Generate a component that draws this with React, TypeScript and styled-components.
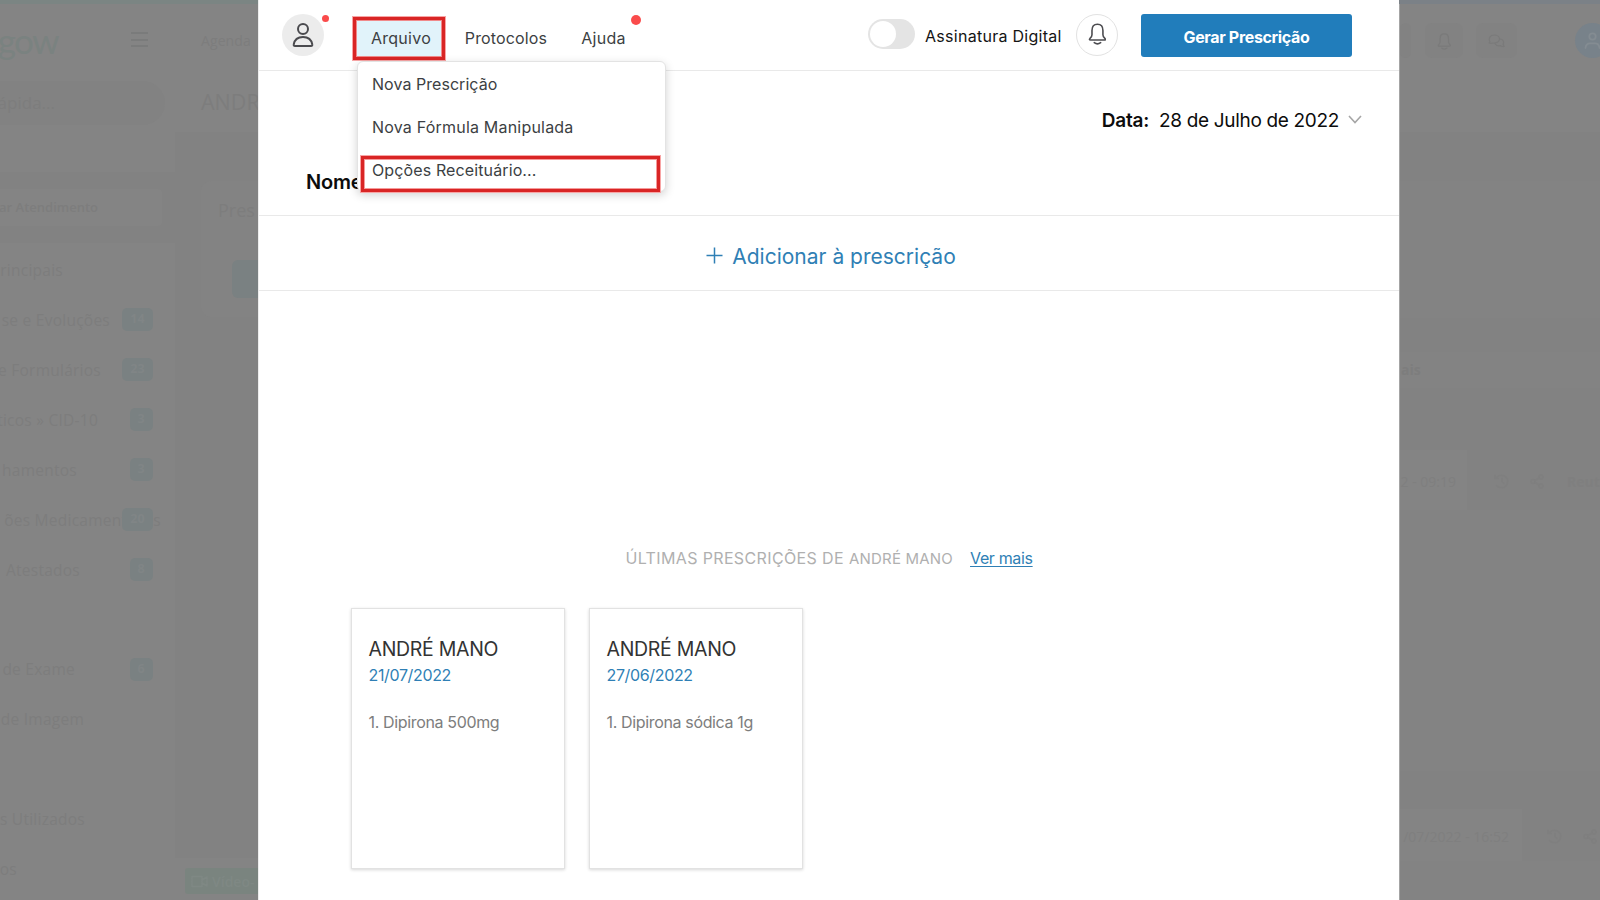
import React from "react";
import styled, { createGlobalStyle } from "styled-components";

const GlobalStyle = createGlobalStyle`
  * { box-sizing: border-box; }
  body { margin: 0; background: #838383; }
  button { font: inherit; border: 0; padding: 0; background: none; }
  svg { display: block; }
`;

const ghostText = "#7d7d7d";

const Page = styled.div`
  position: relative;
  width: 1600px;
  height: 900px;
  overflow: hidden;
  display: grid;
  grid-template-columns: 258px 1141px 201px;
  font-family: Inter, "Liberation Sans", sans-serif;
  color: #3c3f43;
`;

/* ---------- dimmed application, left side ---------- */

const Behind = styled.div<{ $bar: string }>`
  height: 900px;
  overflow: hidden;
  display: flex;
  background: #828282;
  border-top: 4px solid ${(p) => p.$bar};
  font-family: "Open Sans", sans-serif;
  color: ${ghostText};
`;

const Sidebar = styled.aside`
  width: 175px;
  flex: none;
  background: #848484;
`;

const Brand = styled.div`
  height: 77px;
  display: flex;
  justify-content: space-between;
  padding: 13px 27px 0 0;
`;

const Logo = styled.span`
  width: 58px;
  height: 50px;
  display: flex;
  justify-content: flex-end;
  font: 400 35px/46px Lato, sans-serif;
  letter-spacing: -1.6px;
  color: #7a8280;
`;

const Burger = styled.span`
  width: 17px;
  height: 15px;
  margin-top: 15px;
  border: solid #7a7b7b;
  border-width: 2px 0;
  display: flex;
  align-items: center;
  &::after { content: ""; width: 17px; height: 2px; background: #7a7b7b; }
`;

const Search = styled.div`
  width: 165px;
  height: 44px;
  border-radius: 0 22px 22px 0;
  background: #828282;
  font-size: 17px;
  line-height: 44px;
`;

const SideGap = styled.div`
  height: 71px;
  margin: 47px 0 0;
  padding: 17px 0;
  background: #828282;
`;

const Attend = styled.div`
  width: 162px;
  height: 37px;
  border-radius: 0 4px 4px 0;
  background: #848484;
  font-size: 13px;
  line-height: 36px;
  font-weight: 600;
`;

const Cut = styled.span<{ $w: number }>`
  display: flex;
  justify-content: flex-end;
  width: ${(p) => p.$w}px;
  white-space: nowrap;
  flex: none;
`;

const SideMenu = styled.div`
  padding-top: 2px;
`;

const SideRow = styled.div`
  height: 49.95px;
  display: flex;
  align-items: center;
  position: relative;
  font-size: 15.5px;
  letter-spacing: 0.25px;
`;

const Count = styled.span`
  position: absolute;
  right: 22px;
  top: 13px;
  min-width: 22px;
  height: 23px;
  padding: 0 8px;
  border-radius: 5px;
  background: #7a8182;
  color: #808586;
  font-size: 12.5px;
  font-weight: 700;
  line-height: 22px;
`;

const Workspace = styled.div`
  flex: 1;
  display: flex;
  flex-direction: column;
`;

const Head = styled.div`
  height: 128px;
  padding: 24px 0 0 26px;
  background: #848484;
  white-space: nowrap;
`;

const Crumb = styled.div`
  font-size: 14px;
  line-height: 26px;
  letter-spacing: 0.1px;
`;

const PatientTitle = styled.div`
  margin-top: 32px;
  font-size: 21.5px;
  line-height: 32px;
`;

const GhostPanel = styled.div`
  height: 136px;
  margin: 49px 0 0 26px;
  padding: 16px 0 0 17px;
  border-radius: 10px 0 0 10px;
  background: #838383;
  font-size: 18px;
  line-height: 27px;
  white-space: nowrap;
`;

const GhostButton = styled.div`
  height: 38px;
  margin: 36px 0 0 14px;
  border-radius: 6px 0 0 6px;
  background: #7a8182;
`;

const Footer = styled.div`
  height: 42px;
  margin-top: auto;
  padding: 10px 0 0 10px;
  background: #848484;
`;

const VideoButton = styled.div`
  height: 26px;
  padding-left: 6px;
  display: flex;
  align-items: center;
  gap: 4px;
  background: #7a847f;
  color: #7f8884;
  font-size: 14px;
  font-weight: 600;
  white-space: nowrap;
  border-radius: 3px 0 0 3px;
`;

/* ---------- dimmed application, right side ---------- */

const RightArea = styled.div`
  flex: 1;
  border-left: 1px solid #a4a4a4;
`;

const Tools = styled.div`
  height: 128px;
  display: flex;
  align-items: flex-start;
  padding-top: 19px;
  background: #848484;
`;

const Tool = styled.div<{ $w: number; $gap: number }>`
  width: ${(p) => p.$w}px;
  height: 35px;
  padding-top: 1px;
  margin-right: ${(p) => p.$gap}px;
  border-radius: 7px;
  background: #828282;
  display: flex;
  align-items: center;
  justify-content: center;
  color: #7a7a7a;
`;

const UserDot = styled.div`
  width: 35px;
  height: 35px;
  flex: none;
  border-radius: 50%;
  background: #78828a;
  color: #848c92;
  display: flex;
  align-items: center;
  justify-content: center;
`;

const Block = styled.div<{ $h: number; $tone: string }>`
  height: ${(p) => p.$h}px;
  background: ${(p) => p.$tone};
`;

const Tab = styled(Block)`
  padding: 9px 0 0 1px;
  font-size: 14px;
  font-weight: 700;
  line-height: 18px;
`;

const Entry = styled.div<{ $w: number; $h: number }>`
  height: ${(p) => p.$h}px;
  padding-top: 2px;
  display: flex;
  align-items: center;
  background: linear-gradient(to right, #848484 ${(p) => p.$w}px, #828282 ${(p) => p.$w}px);
  font-size: 14px;
  white-space: nowrap;
  color: #7f7f7f;
`;

const Stamp = styled.span<{ $w: number; $space: number }>`
  width: ${(p) => p.$w}px;
  margin-right: ${(p) => p.$space}px;
  flex: none;
  display: flex;
  justify-content: flex-end;
`;

const EntryIcons = styled.span`
  display: flex;
  gap: 21px;
  margin-right: 23px;
`;

/* ---------- prescription window ---------- */

const Modal = styled.main`
  position: relative;
  height: 900px;
  background: #fff;
  border-left: 1px solid #ececec;
`;

const Header = styled.header`
  height: 71px;
  padding: 14px 47px 0 23px;
  display: flex;
  align-items: flex-start;
  border-bottom: 1px solid #e9e9e9;
`;

const Avatar = styled.div`
  position: relative;
  width: 42px;
  height: 42px;
  border-radius: 50%;
  background: #ececec;
  display: flex;
  align-items: center;
  justify-content: center;
  color: #4a4a4e;
`;

const Alert = styled.i<{ $size: number; $x: number; $y: number }>`
  position: absolute;
  right: ${(p) => p.$x}px;
  top: ${(p) => p.$y}px;
  width: ${(p) => p.$size}px;
  height: ${(p) => p.$size}px;
  border-radius: 50%;
  background: #fa4b4b;
`;

const Nav = styled.nav`
  display: flex;
  margin: 3px 0 0 29px;
`;

const NavItem = styled.button<{ $active?: boolean; $w: number; $ls: number }>`
  position: relative;
  width: ${(p) => p.$w}px;
  height: 43px;
  padding-bottom: 2px;
  font-size: 16px;
  letter-spacing: ${(p) => p.$ls}px;
  color: #3c3f43;
  ${(p) => p.$active && `padding-left: 4px; background: #e1f3fa; border: 3px solid #d92525; box-shadow: inset 0 0 0 1px #f08a8a, 0 0 0 1px #f8a5a5;`}
`;

const Actions = styled.div`
  display: flex;
  margin-left: auto;
`;

const Toggle = styled.div`
  width: 47px;
  height: 30px;
  margin-top: 5px;
  padding: 2px;
  border-radius: 15px;
  background: #e4e4e4;
  &::after {
    content: "";
    display: block;
    width: 26px;
    height: 26px;
    border-radius: 50%;
    background: #fff;
  }
`;

const ToggleLabel = styled.span`
  width: 161px;
  padding-left: 10px;
  font-size: 16px;
  letter-spacing: 0.28px;
  line-height: 44px;
  color: #141414;
`;

const Bell = styled.div`
  width: 42px;
  height: 42px;
  padding-bottom: 3px;
  margin-right: 23px;
  border: 1.5px solid #e2e2e2;
  border-radius: 50%;
  display: flex;
  align-items: center;
  justify-content: center;
  color: #4c4c50;
`;

const Primary = styled.button`
  width: 211px;
  height: 43px;
  padding-top: 2px;
  border-radius: 3px;
  background: #217dbb;
  color: #fff;
  font-size: 16px;
  font-weight: 700;
  letter-spacing: -0.34px;
`;

const Patient = styled.section`
  height: 145px;
  padding: 36px 37px 0 47px;
  border-bottom: 1px solid #e9e9e9;
  color: #0c0c0c;
`;

const DateRow = styled.div`
  display: flex;
  justify-content: flex-end;
  align-items: center;
  font-size: 19px;
  line-height: 27px;
`;

const DateLabel = styled.b`
  font-weight: 600;
  letter-spacing: -0.2px;
  margin-right: 10px;
`;

const DateValue = styled.span`
  letter-spacing: -0.33px;
  margin-right: 9px;
`;

const NameLabel = styled.div`
  margin-top: 34px;
  font-size: 20px;
  font-weight: 600;
  line-height: 28px;
  letter-spacing: -0.2px;
`;

const AddRow = styled.button`
  width: 100%;
  height: 75px;
  padding: 5px 0 0 4px;
  display: flex;
  justify-content: center;
  align-items: center;
  gap: 9px;
  border-bottom: 1px solid #e9e9e9;
  font-size: 21px;
  color: #2f7fb5;
`;

const AddText = styled.span`
  padding-top: 2px;
`;

const Recent = styled.div`
  height: 28px;
  margin: 253px 0 36px;
  display: flex;
  justify-content: center;
  align-items: center;
  font-size: 16px;
  color: #b0b0b0;
`;

const RecentTitle = styled.span`
  letter-spacing: 0.37px;
  margin-right: 5px;
`;

const RecentName = styled.span`
  font-size: 15px;
  letter-spacing: 0.2px;
  margin-right: 17px;
`;

const More = styled.a`
  color: #2f7fb5;
  letter-spacing: -0.35px;
  text-decoration: underline;
  text-underline-offset: 2px;
`;

const Cards = styled.div`
  display: flex;
  gap: 24px;
  padding-left: 91.5px;
`;

const Card = styled.article`
  width: 214px;
  height: 261px;
  padding: 27px 17px;
  border: 1px solid #e2e2e2;
  box-shadow: 0 1px 3px rgba(0, 0, 0, 0.16);
  white-space: nowrap;
`;

const CardName = styled.div`
  font-size: 19.5px;
  line-height: 27px;
  letter-spacing: -0.3px;
  color: #333;
`;

const CardDate = styled.div`
  font-size: 16px;
  line-height: 24px;
  letter-spacing: -0.35px;
  color: #2f7fb5;
`;

const CardItem = styled.div`
  margin-top: 23px;
  font-size: 16px;
  line-height: 24px;
  letter-spacing: -0.35px;
  color: #7d7d7d;
`;

const Menu = styled.div`
  position: absolute;
  left: 98px;
  top: 61px;
  width: 309px;
  height: 131px;
  padding-top: 1px;
  border: 1px solid #e3e3e3;
  border-radius: 6px;
  background: #fff;
  box-shadow: 0 3px 10px rgba(0, 0, 0, 0.18);
`;

const MenuItem = styled.div<{ $ls: number }>`
  height: 43px;
  padding-left: 14px;
  font-size: 16px;
  line-height: 42px;
  letter-spacing: ${(p) => p.$ls}px;
  color: #3c3f43;
`;

const Marker = styled.div`
  position: absolute;
  left: 3px;
  top: 94px;
  width: 299px;
  height: 36px;
  border: 3px solid #d92525;
  box-shadow: inset 0 0 0 1px #f59a9a, 0 0 0 1px #f8a5a5;
`;

type IconProps = { size?: number };

const strokeProps = { fill: "none", stroke: "currentColor", strokeLinecap: "round" as const, strokeLinejoin: "round" as const };

const PersonIcon = () => (
  <svg width="22" height="26" viewBox="0 0 22 26" {...strokeProps} strokeWidth="2">
    <circle cx="11" cy="7" r="5" />
    <path d="M3 24h16c1 0 1.500-.6 1.300-1.500C19.500 18 16 15 11 15S2.500 18 1.700 22.500C1.500 23.400 2 24 3 24Z" />
  </svg>
);

const BellIcon = ({ size = 22 }: IconProps) => (
  <svg width={size * 0.86} height={size} viewBox="0 0 19 22" {...strokeProps} strokeWidth="1.6">
    <path d="M4 7.500C4 3.500 6.300 1.200 9.500 1.200S15 3.500 15 7.500v4.200c0 1.600.7 2.400 1.800 3.500 1.100 1.200.9 1.900-.4 1.900H2.600c-1.300 0-1.500-.7-.4-1.900C3.300 14.100 4 13.300 4 11.700Z" />
    <path d="M6.300 19.700c1.800 1.400 4.600 1.400 6.400 0" />
  </svg>
);

const ChatIcon = () => (
  <svg width="17" height="15" viewBox="0 0 17 15" {...strokeProps} strokeWidth="1.200">
    <path d="M1 9c.8-.5 1-1 .8-1.500C.2 4 2.500 1 6 1s5.500 2 5.500 4-2 4-5 4c-2 0-3.500.6-5.500 0Z" />
    <path d="M12.500 5c2.500.5 4 3 2.600 5.200l1 2.300c-1.500.2-2.800-.3-3.600-.8-2.500.5-4.500-.4-5.300-2" />
  </svg>
);

const HistoryIcon = () => (
  <svg width="15" height="15" viewBox="0 0 15 15" {...strokeProps} strokeWidth="1.500">
    <path d="M2.500 3.500a6.300 6.300 0 1 1 0 8M1 1.500v3h3M8 4v4l2 1.500" />
  </svg>
);

const ShareIcon = () => (
  <svg width="14" height="15" viewBox="0 0 14 15" {...strokeProps} strokeWidth="1.500">
    <circle cx="3" cy="7.500" r="2" />
    <circle cx="11" cy="3" r="2" />
    <circle cx="11" cy="12" r="2" />
    <path d="m5 6.500 4-2.400M5 8.500l4 2.400" />
  </svg>
);

const SmallUser = () => (
  <svg width="17" height="17" viewBox="0 0 17 17" {...strokeProps} strokeWidth="1.800">
    <circle cx="8.500" cy="4.500" r="3.200" />
    <path d="M1.500 16c.3-3.200 2-4.700 4.500-4.700h5c2.500 0 4.200 1.500 4.500 4.700" />
  </svg>
);

const VideoIcon = () => (
  <svg width="17" height="13" viewBox="0 0 17 13" {...strokeProps} strokeWidth="1.600">
    <path d="M1 1.500h10v10H1zM11 5l5-3v9l-5-3" />
  </svg>
);

const menuRows: [string, number, number?][] = [
  ["se e Evoluções", 110, 14],
  ["e Formulários", 101, 23],
  ["ticos » CID-10", 98, 3],
  ["hamentos", 77, 3],
  ["ões Medicamentosas", 161, 20],
  ["Atestados", 80, 8],
  ["", 0],
  ["de Exame", 75, 6],
  ["de Imagem", 84],
  ["", 0],
  ["s Utilizados", 85],
  ["os", 17],
];

const prescriptions = [
  { name: "ANDRÉ MANO", date: "21/07/2022", item: "1. Dipirona 500mg" },
  { name: "ANDRÉ MANO", date: "27/06/2022", item: "1. Dipirona sódica 1g" },
];

export default function App() {
  return (
    <Page>
      <GlobalStyle />
      <Behind $bar="#7b8583">
        <Sidebar>
          <Brand>
            <Logo>gow</Logo>
            <Burger />
          </Brand>
          <Search><Cut $w={55}>ápida...</Cut></Search>
          <SideGap>
            <Attend><Cut $w={98}>iar Atendimento</Cut></Attend>
          </SideGap>
          <SideMenu>
            <SideRow><Cut $w={63}>rincipais</Cut></SideRow>
            {menuRows.map(([label, width, count], i) => (
              <SideRow key={i}>
                <Cut $w={width}>{label}</Cut>
                {count && <Count>{count}</Count>}
              </SideRow>
            ))}
          </SideMenu>
        </Sidebar>
        <Workspace>
          <Head>
            <Crumb>Agenda</Crumb>
            <PatientTitle>ANDR</PatientTitle>
          </Head>
          <GhostPanel>
            Pres
            <GhostButton />
          </GhostPanel>
          <Footer>
            <VideoButton><VideoIcon />Vídeo-</VideoButton>
          </Footer>
        </Workspace>
      </Behind>

      <Modal>
        <Header>
          <Avatar>
            <PersonIcon />
            <Alert $size={7} $x={-4.5} $y={0.5} />
          </Avatar>
          <Nav>
            <NavItem $active $w={92} $ls={0.26}>Arquivo</NavItem>
            <NavItem $w={122} $ls={0.15}>Protocolos</NavItem>
            <NavItem $w={73} $ls={0.25}>
              Ajuda
              <Alert $size={10} $x={-0.5} $y={-2} />
            </NavItem>
          </Nav>
          <Actions>
            <Toggle />
            <ToggleLabel>Assinatura Digital</ToggleLabel>
            <Bell><BellIcon /></Bell>
            <Primary>Gerar Prescrição</Primary>
          </Actions>
        </Header>

        <Patient>
          <DateRow>
            <DateLabel>Data:</DateLabel>
            <DateValue>28 de Julho de 2022</DateValue>
            <svg width="14" height="11" viewBox="0 0 14 11" fill="none" stroke="#a6a6a6" strokeWidth="1.600">
              <path d="m1 1 6 6.500L13 1" />
            </svg>
          </DateRow>
          <NameLabel>Nome:</NameLabel>
        </Patient>

        <AddRow>
          <svg width="17" height="17" viewBox="0 0 17 17" stroke="currentColor" strokeWidth="1.500">
            <path d="M8.500 .5v16M.5 8.500h16" />
          </svg>
          <AddText>Adicionar à prescrição</AddText>
        </AddRow>

        <Recent>
          <RecentTitle>ÚLTIMAS PRESCRIÇÕES DE</RecentTitle>
          <RecentName>ANDRÉ MANO</RecentName>
          <More>Ver mais</More>
        </Recent>

        <Cards>
          {prescriptions.map((p) => (
            <Card key={p.date}>
              <CardName>{p.name}</CardName>
              <CardDate>{p.date}</CardDate>
              <CardItem>{p.item}</CardItem>
            </Card>
          ))}
        </Cards>

        <Menu>
          <MenuItem $ls={0.05}>Nova Prescrição</MenuItem>
          <MenuItem $ls={0.2}>Nova Fórmula Manipulada</MenuItem>
          <MenuItem $ls={0.12}>Opções Receituário...</MenuItem>
          <Marker />
        </Menu>
      </Modal>

      <Behind $bar="#7b8187">
        <RightArea>
          <Tools>
            <Tool $w={11} $gap={14} />
            <Tool $w={38} $gap={13}><BellIcon size={17} /></Tool>
            <Tool $w={41} $gap={58}><ChatIcon /></Tool>
            <UserDot><SmallUser /></UserDot>
          </Tools>
          <Block $h={49} $tone="#828282" />
          <Block $h={137} $tone="#838383" />
          <Block $h={34} $tone="#828282" />
          <Tab $h={36} $tone="#838383">ais</Tab>
          <Block $h={62} $tone="#828282" />
          <Entry $w={67} $h={60}>
            <Stamp $w={56} $space={38}>2 - 09:19</Stamp>
            <EntryIcons><HistoryIcon /><ShareIcon /></EntryIcons>
            <b>Reut</b>
          </Entry>
          <Block $h={261} $tone="#838383" />
          <Block $h={38} $tone="#828282" />
          <Entry $w={122} $h={52}>
            <Stamp $w={109} $space={38}>/07/2022 - 16:52</Stamp>
            <EntryIcons><HistoryIcon /><ShareIcon /></EntryIcons>
          </Entry>
          <Block $h={39} $tone="#838383" />
        </RightArea>
      </Behind>
    </Page>
  );
}
